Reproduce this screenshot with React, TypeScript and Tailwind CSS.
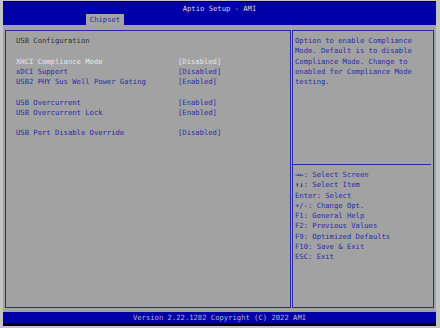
const rows: ({ label: string; value: string; active?: boolean } | null)[] = [
  { label: 'XHCI Compliance Mode', value: '[Disabled]', active: true },
  { label: 'xDCI Support', value: '[Disabled]' },
  { label: 'USB2 PHY Sus Well Power Gating', value: '[Enabled]' },
  null,
  { label: 'USB Overcurrent', value: '[Enabled]' },
  { label: 'USB Overcurrent Lock', value: '[Enabled]' },
  null,
  { label: 'USB Port Disable Override', value: '[Disabled]' },
];

const keys: [string, string][] = [
  ['→←', ': Select Screen'],
  ['↑↓', ': Select Item'],
  ['', 'Enter: Select'],
  ['', '+/-: Change Opt.'],
  ['', 'F1: General Help'],
  ['', 'F2: Previous Values'],
  ['', 'F9: Optimized Defaults'],
  ['', 'F10: Save & Exit'],
  ['', 'ESC: Exit'],
];

export default function App() {
  return (
    <div
      className="w-[440px] h-[328px] bg-[#c4c4c4] pl-[3px] pr-[4px] pt-[1px] pb-[2px] text-[7.2px] leading-[10.25px] whitespace-pre"
      style={{ fontFamily: '"DejaVu Sans Mono", "Liberation Mono", monospace' }}
    >
      <div className="flex flex-col h-full">
        <div className="h-[1px] bg-black" />

        {/* Header */}
        <div className="h-[23px] bg-[#0000a8] flex flex-col">
          <div className="pt-[2px] text-center text-[#d4d4e0]">Aptio Setup - AMI</div>
          <div className="mt-auto pl-[83px]">
            <div className="w-[38px] h-[11px] bg-[#a4a4a4] text-[#2a2aa8] text-center leading-[11px]">Chipset</div>
          </div>
        </div>

        {/* Body */}
        <div className="flex-1 bg-[#a2a2a2] pl-[2px] pr-[2px] pt-[5px] pb-[4px] flex gap-[1px]">
          <div className="w-[286px] border border-[#2a2aa0] pl-[10px] pt-[5px]">
            <div className="text-[#303030]">USB Configuration</div>
            <div className="h-[10.25px]" />
            {rows.map((r, i) =>
              r ? (
                <div key={i} className={`grid grid-cols-[162px_1fr] ${r.active ? 'text-[#e8e8e8]' : 'text-[#2a2aa8]'}`}>
                  <span>{r.label}</span>
                  <span>{r.value}</span>
                </div>
              ) : (
                <div key={i} className="h-[10.25px]" />
              )
            )}
          </div>

          <div className="flex-1 border border-[#2a2aa0] flex flex-col">
            <div className="h-[133px] pl-[2px] pt-[5px] text-[#2a2aa8] whitespace-normal">
              Option to enable Compliance Mode. Default is to disable Compliance Mode. Change to enabled for Compliance Mode testing.
            </div>
            <div className="border-t border-[#2a2aa0] mr-[2px]" />
            <div className="pl-[2px] pt-[5px] text-[#2a2aa8]">
              {keys.map(([a, k]) => (
                <div key={k}>
                  {a && <span className="font-bold">{a}</span>}
                  {k}
                </div>
              ))}
            </div>
          </div>
        </div>

        {/* Footer */}
        <div className="h-[11px] bg-[#0000a8] text-center text-[#b8b8c8] leading-[11px]">
          Version 2.22.1282 Copyright (C) 2022 AMI
        </div>
        <div className="h-[3px] bg-black" />
      </div>
    </div>
  );
}
